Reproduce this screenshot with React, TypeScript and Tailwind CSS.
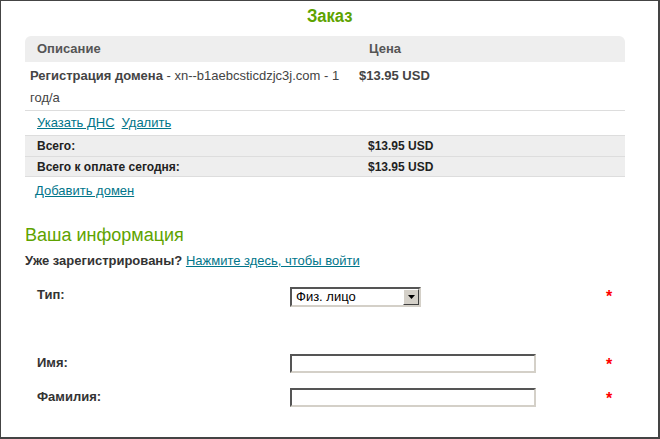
import React from "react";

const font = { fontFamily: '"Liberation Sans", Arial, sans-serif' };

function Field({ label, children }: { label: string; children: React.ReactNode }) {
  return (
    <div className="flex items-start">
      <div className="w-[265px] pl-[12px] text-[13px] leading-[20px] font-bold text-[#333]">{label}</div>
      <div className="w-[316px]">{children}</div>
      <div className="pt-[4px] text-[16px] font-bold leading-[16px] text-[#f00]">*</div>
    </div>
  );
}

const inset =
  "border-2 border-t-[#555] border-l-[#555] border-b-[#d4d0c8] border-r-[#d4d0c8] bg-white";

export default function App() {
  return (
    <div
      className="w-[660px] h-[439px] border-t border-l border-b-2 border-r-2 border-[#444] bg-white pl-[24px] overflow-hidden"
      style={font}
    >
      <div className="pt-[3px] pr-[24px] text-center">
        <h1 className="inline-block scale-x-[0.92] text-[18px] leading-[24px] font-bold text-[#5ea300]">
          Заказ
        </h1>
      </div>

      <div className="mt-[7px] w-[600px]">
        <div className="flex h-[26px] items-center rounded-t-[6px] bg-[#eee] text-[13px] font-bold text-[#555]">
          <div className="w-[344px] pl-[12px]">Описание</div>
          <div>Цена</div>
        </div>
        <div className="flex border-b border-[#ddd] pt-[3px] pb-[1px] text-[13px] leading-[22px] text-[#444]">
          <div className="w-[334px] pl-[5px]">
            <b>Регистрация домена</b> - xn--b1aebcsticdzjc3j.com - 1 год/а
          </div>
          <div className="font-bold">$13.95 USD</div>
        </div>
        <div className="flex h-[24px] items-center gap-[7px] pl-[12px] text-[13px] text-[#00758a]">
          <a className="underline" href="#">Указать ДНС</a>
          <a className="underline" href="#">Удалить</a>
        </div>
        <div className="bg-[#eee] text-[12px] font-bold text-[#222]">
          <div className="flex h-[21px] items-center border-t border-[#ddd]">
            <div className="w-[343px] pl-[12px]">Всего:</div>
            <div>$13.95 USD</div>
          </div>
          <div className="flex h-[21px] items-center border-t border-b border-[#ddd]">
            <div className="w-[343px] pl-[12px]">Всего к оплате сегодня:</div>
            <div>$13.95 USD</div>
          </div>
        </div>
        <div className="pl-[10px] pt-[4px] text-[13px] text-[#00758a]">
          <a className="underline" href="#">Добавить домен</a>
        </div>
      </div>

      <h2 className="mt-[22px] text-[18px] leading-[24px] text-[#5ea300]">Ваша информация</h2>
      <div className="mt-[5px] text-[13px] leading-[18px] text-[#333]">
        <b>Уже зарегистрированы?</b>{" "}
        <a className="underline text-[#00758a]" href="#">
          Нажмите здесь, чтобы войти
        </a>
      </div>

      <div className="mt-[15px] flex flex-col">
        <Field label="Тип:">
          <div className={`mt-[2px] flex h-[20px] w-[131px] ${inset}`}>
            <span className="flex-1 pl-[4px] text-[13px] leading-[16px] text-black">Физ. лицо</span>
            <span className="flex w-[16px] items-center justify-center border border-t-white border-l-white border-b-[#404040] border-r-[#404040] bg-[#d4d0c8]">
              <svg width="7" height="4" viewBox="0 0 7 4"><path d="M0 0h7L3.5 4z" fill="#000" /></svg>
            </span>
          </div>
        </Field>
        <div className="h-[46px]" />
        <Field label="Имя:">
          <div className={`mt-[1px] h-[19px] w-[246px] ${inset}`} />
        </Field>
        <div className="h-[14px]" />
        <Field label="Фамилия:">
          <div className={`mt-[1px] h-[19px] w-[246px] ${inset}`} />
        </Field>
      </div>
    </div>
  );
}
